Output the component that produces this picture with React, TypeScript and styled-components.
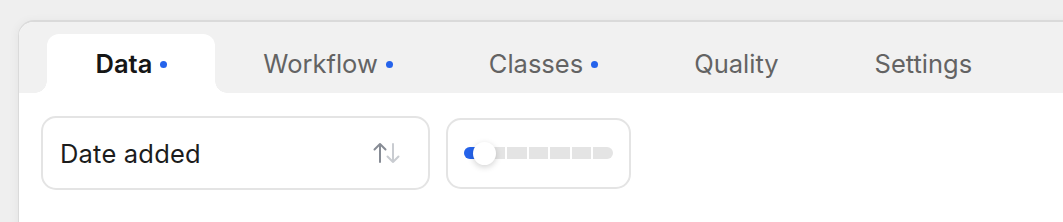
import React from "react";
import styled, { createGlobalStyle } from "styled-components";

const GlobalStyle = createGlobalStyle`
  html, body {
    margin: 0;
    padding: 0;
    background: #efefef;
    overflow: hidden;
    font-family: Inter, "Noto Sans", "Liberation Sans", sans-serif;
  }
`;

const Page = styled.div`
  width: 100vw;
  height: 100vh;
  padding: 20px 0 0 18px;
  box-sizing: border-box;
  overflow: hidden;
`;

const Panel = styled.div`
  width: calc(100% + 40px);
  height: calc(100% + 20px);
  border: 1px solid #dadada;
  border-top-width: 2px;
  border-bottom: none;
  border-radius: 16px 16px 0 0;
  background: #ffffff;
  overflow: hidden;
  box-shadow: -2px 0 8px rgba(0, 0, 0, 0.04);
`;

const TabBar = styled.div`
  display: flex;
  align-items: flex-end;
  height: 71px;
  padding: 0 0 0 28px;
  background: #f1f1f1;
  box-sizing: border-box;
`;

interface ITabProps {
  selected: boolean;
}

const Tab = styled("div")<ITabProps>`
  position: relative;
  display: flex;
  align-items: center;
  justify-content: center;
  gap: 8px;
  height: 59px;
  padding: 0 47.5px 0 48.5px;
  box-sizing: border-box;
  border-radius: 12px 12px 0 0;
  font-size: 25.5px;
  font-weight: ${props => (props.selected ? 600 : 400)};
  color: ${props => (props.selected ? "#161616" : "#636363")};
  background: ${props => (props.selected ? "#ffffff" : "transparent")};
  &::before,
  &::after {
    content: "";
    display: ${props => (props.selected ? "block" : "none")};
    position: absolute;
    bottom: 0;
    width: 12px;
    height: 12px;
  }
  &::before {
    left: -12px;
    background: radial-gradient(circle at 0 0, transparent 11.5px, #ffffff 12px);
  }
  &::after {
    right: -12px;
    background: radial-gradient(circle at 100% 0, transparent 11.5px, #ffffff 12px);
  }
`;

const Dot = styled.span`
  width: 7px;
  height: 7px;
  border-radius: 50%;
  background: #2563eb;
  margin-top: 1px;
`;

const Content = styled.div`
  display: flex;
  align-items: center;
  gap: 16px;
  padding: 23px 0 0 22px;
`;

const Select = styled.div`
  display: flex;
  align-items: center;
  justify-content: space-between;
  width: 389px;
  height: 74px;
  padding: 0 27px 0 17px;
  box-sizing: border-box;
  border: 2px solid #e4e4e4;
  border-radius: 15px;
  font-size: 25.5px;
  letter-spacing: 0.2px;
  color: #1c1c1c;
`;

const SliderBox = styled.div`
  display: flex;
  align-items: center;
  width: 185px;
  height: 71px;
  padding: 0 16px;
  box-sizing: border-box;
  border: 2px solid #e4e4e4;
  border-radius: 15px;
`;

const Track = styled.div`
  position: relative;
  display: flex;
  gap: 2px;
  width: 150px;
  height: 12px;
`;

interface ISegmentProps {
  first: boolean;
  last: boolean;
}

const Segment = styled("div")<ISegmentProps>`
  flex: 1;
  height: 12px;
  background: #e4e4e4;
  border-radius: ${props =>
    props.first ? "6px 0 0 6px" : props.last ? "0 6px 6px 0" : "0"};
`;

const Fill = styled.div`
  position: absolute;
  left: 0;
  top: 0;
  width: 16px;
  height: 12px;
  border-radius: 6px 0 0 6px;
  background: #2563eb;
`;

const Knob = styled.div`
  position: absolute;
  left: 9px;
  top: -5px;
  width: 23px;
  height: 23px;
  border-radius: 50%;
  background: #ffffff;
  box-shadow: 0 2px 6px rgba(0, 0, 0, 0.18);
`;

const tabs = [
  { label: "Data", dot: true },
  { label: "Workflow", dot: true },
  { label: "Classes", dot: true },
  { label: "Quality", dot: false },
  { label: "Settings", dot: false }
];

const SortIcon = () => (
  <svg width="28" height="24" viewBox="0 0 28 24" fill="none">
    <path
      d="M7 21V3M1.5 8.5L7 3l5.5 5.5"
      stroke="#878c95"
      strokeWidth="2"
      strokeLinecap="round"
      strokeLinejoin="round"
    />
    <path
      d="M20 3v18M14.5 15.5L20 21l5.5-5.5"
      stroke="#c9ccd1"
      strokeWidth="2"
      strokeLinecap="round"
      strokeLinejoin="round"
    />
  </svg>
);

export default function App() {
  return (
    <Page>
      <GlobalStyle />
      <Panel>
        <TabBar>
          {tabs.map((tab, index) => (
            <Tab key={tab.label} selected={index === 0}>
              {tab.label}
              {tab.dot && <Dot />}
            </Tab>
          ))}
        </TabBar>
        <Content>
          <Select>
            Date added
            <SortIcon />
          </Select>
          <SliderBox>
            <Track>
              {Array.from({ length: 7 }).map((_, i) => (
                <Segment key={i} first={i === 0} last={i === 6} />
              ))}
              <Fill />
              <Knob />
            </Track>
          </SliderBox>
        </Content>
      </Panel>
    </Page>
  );
}
